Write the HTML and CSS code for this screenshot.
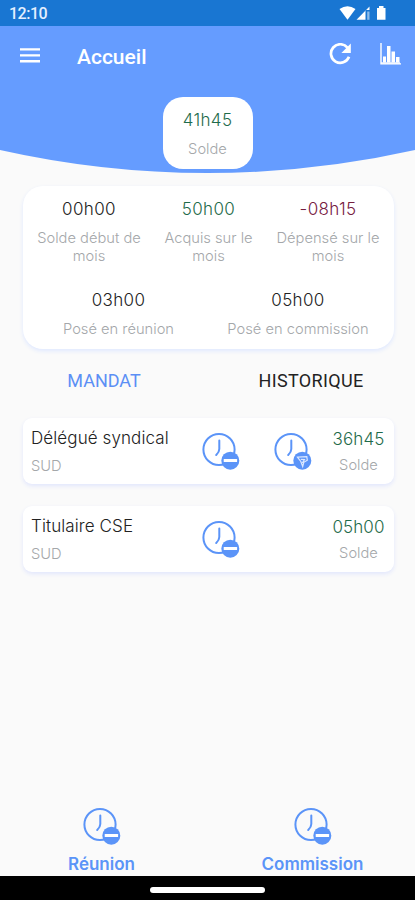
FILE: index.html
```html
<!DOCTYPE html>
<html lang="fr">
<head>
<meta charset="utf-8">
<meta name="viewport" content="width=device-width, initial-scale=1">
<title>Accueil</title>
<link rel="stylesheet" href="styles.css">
</head>
<body>
<svg class="defs" aria-hidden="true">
  <symbol id="clock" viewBox="0 0 38 38">
    <circle cx="17" cy="17.5" r="15.6" fill="none" stroke="currentColor" stroke-width="2"/>
    <path d="M17.300 8.500v8.500q0 3-3.100 6" fill="none" stroke="currentColor" stroke-width="2" stroke-linecap="round"/>
    <circle cx="28.300" cy="28.700" r="9" fill="currentColor"/>
  </symbol>
  <symbol id="clock-minus" viewBox="0 0 38 38">
    <use href="#clock"/>
    <rect x="21.700" y="26.900" width="13.400" height="3" rx=".5" fill="#fff"/>
  </symbol>
  <symbol id="clock-filter" viewBox="0 0 38 38">
    <use href="#clock"/>
    <path d="M23.500 25.200L32.800 24.700L33.300 28.300L29.800 30.300L28.700 34.500L26.800 29.500ZM26.800 27.400L30.500 27.600L28.300 31" fill="none" stroke="#dce8ff" stroke-width="1.200"/>
  </symbol>
</svg>
<div class="screen">
  <header class="hero">
    <svg class="curve" viewBox="0 0 415 174" preserveAspectRatio="none" aria-hidden="true"><path d="M0 0H415V150A947 947 0 0 1 0 150Z" fill="#659cff"/></svg>
    <div class="hero-content">
      <div class="status">
        <span>12:10</span>
        <svg width="50" height="16" viewBox="0 0 50 16" fill="#fff" aria-hidden="true">
          <path d="M.5 4Q8.500-1.500 16.500 4L8.500 14.800Z"/>
          <path d="M17.500 14.800L30.500 1.500V5H26.500V14.800Z"/>
          <path d="M28.200 6.500H30.500V14.800H28.200Z" opacity=".5"/>
          <path d="M38 3H40V1H44.500V3H46.500V14.800H38Z"/>
        </svg>
      </div>
      <div class="toolbar">
        <svg class="menu" width="20" height="15" viewBox="0 0 20 15" fill="#fff" aria-hidden="true"><path d="M0 .3H20V2.600H0ZM0 6.200H20V8.500H0ZM0 12.100H20V14.400H0Z"/></svg>
        <h1>Accueil</h1>
        <svg class="refresh" width="22" height="22" viewBox="0 0 22 22" aria-hidden="true">
          <path d="M18.500 4.700A9.300 9.300 0 1 0 20 13.800" fill="none" stroke="#fff" stroke-width="2.700"/>
          <path d="M21.800 .6V10H12.400Z" fill="#fff"/>
        </svg>
        <svg class="chart" width="21" height="22" viewBox="0 0 21 22" fill="#fff" aria-hidden="true"><path d="M.3 0H1.700V20.300H21V21.500H.3ZM3 13.500H6V19.500H3ZM7 3H10.500V19.500H7ZM11.500 8.500H15V19.500H11.500ZM16 14H19.500V19.500H16Z"/><path d="M1 19H20V21H1Z" opacity=".7"/></svg>
      </div>
      <div class="total"><b class="green">41h45</b><small>Solde</small></div>
    </div>
  </header>
  <main>
    <section class="summary">
      <div class="row three">
        <div><b>00h00</b><small>Solde début de<br>mois</small></div>
        <div><b class="green">50h00</b><small>Acquis sur le<br>mois</small></div>
        <div><b class="red">-08h15</b><small>Dépensé sur le<br>mois</small></div>
      </div>
      <div class="row two">
        <div><b>03h00</b><small>Posé en réunion</small></div>
        <div><b>05h00</b><small>Posé en commission</small></div>
      </div>
    </section>
    <nav class="tabs"><a class="active">MANDAT</a><a class="history">HISTORIQUE</a></nav>
    <article class="mandate">
      <div class="name"><b>Délégué syndical</b><small>SUD</small></div>
      <svg class="icon"><use href="#clock-minus"/></svg>
      <svg class="icon"><use href="#clock-filter"/></svg>
      <div class="balance"><b class="green">36h45</b><small>Solde</small></div>
    </article>
    <article class="mandate">
      <div class="name"><b>Titulaire CSE</b><small>SUD</small></div>
      <svg class="icon"><use href="#clock-minus"/></svg>
      <span></span>
      <div class="balance"><b class="green">05h00</b><small>Solde</small></div>
    </article>
  </main>
  <footer class="actions">
    <div><svg class="icon"><use href="#clock-minus"/></svg><span>Réunion</span></div>
    <div><svg class="icon"><use href="#clock-minus"/></svg><span>Commission</span></div>
  </footer>
  <div class="gesture"><i></i></div>
</div>
</body>
</html>
```

FILE: styles.css
```css
* { box-sizing: border-box; }
body { margin: 0; background: #fafafa; font-family: Inter, sans-serif; color: #222; }
.defs { display: none; }
.screen { height: 900px; display: flex; flex-direction: column; overflow: hidden; }
.hero { display: grid; height: 174px; flex: none; }
.hero > * { grid-area: 1 / 1; }
.curve { width: 100%; height: 174px; }
.hero-content { display: flex; flex-direction: column; align-items: stretch; }
.status { height: 26px; background: #1976d2; display: flex; justify-content: space-between; padding: 5px 26px 0 9px; font: 500 16px/17px Roboto, sans-serif; color: #e3efff; }
.status span { letter-spacing: -.5px; }
.toolbar { height: 71px; display: flex; align-items: flex-start; padding: 17px 14px 0 20px; }
.menu { margin-top: 5px; }
.toolbar h1 { margin: 2px auto 0 37px; font: 500 21px/24px Roboto, sans-serif; color: #fff; }
.refresh { margin-right: 29px; }
.total { width: 90px; height: 72px; align-self: center; background: #fff; border-radius: 20px; text-align: center; padding-top: 12px; }
b { display: block; font-weight: 300; font-size: 17px; line-height: 22px; letter-spacing: .1px; }
small { display: block; font-weight: 300; font-size: 14.7px; line-height: 18px; color: #a4a7aa; }
.green { color: #1f6b4b; }
.red { color: #76203f; }
.total b, .row b { letter-spacing: .35px; }
.total small { margin-top: 9px; }
main { padding: 12px 21px 0 23px; flex: 1; }
.summary { height: 163px; background: #fff; border-radius: 20px; box-shadow: 0 2px 4px #dfe8ff; padding-top: 12px; text-align: center; }
.row { display: grid; }
.three { grid-template-columns: 132px 107px 132px; }
.two { grid-template-columns: 191px 168px; margin-top: 24px; }
.row small { margin-top: 9px; }
.row.two small { margin-top: 9px; }
.tabs { height: 69px; padding-top: 20px; display: grid; grid-template-columns: 162px 1fr; text-align: center; font: 400 18px/24px Roboto, sans-serif; color: #222; }
.tabs .active { color: #5b8ff5; }
.tabs .history { padding-left: 43px; letter-spacing: .35px; }
.mandate { height: 66px; margin-bottom: 22px; padding: 9px 9px 0 8px; display: grid; grid-template-columns: 171px 72px 58px 1fr; background: #fff; border-radius: 9px; box-shadow: 0 2px 4px #e1e6fc; }
.icon { width: 38px; height: 38px; color: #5b94f8; }
.mandate .icon { margin-top: 5px; }
.name small { margin-top: 8px; }
.balance { text-align: center; padding-top: 1px; }
.balance small { margin-top: 6px; }
.actions { display: grid; grid-template-columns: 203px 219px; text-align: center; font: 600 17px/20px Inter, sans-serif; color: #5b94f8; height: 69px; }
.actions div { display: flex; flex-direction: column; align-items: center; }
.actions span { margin-top: 9px; }
.gesture { flex: none; height: 24px; background: #000; display: flex; justify-content: center; padding-top: 11px; }
.gesture i { width: 115px; height: 6px; border-radius: 3px; background: #fff; }
```
